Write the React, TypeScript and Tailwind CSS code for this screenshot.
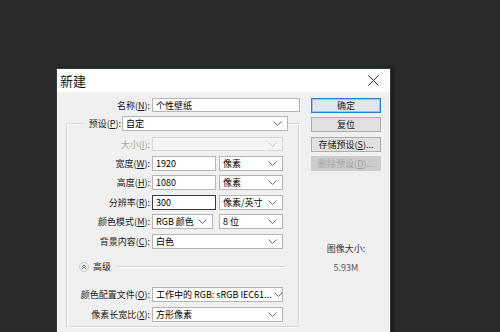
import React from 'react';

const Chevron = ({ light }: { light?: boolean }) => (
  <svg width="9" height="5" viewBox="0 0 9 5" className="shrink-0">
    <polyline points="0.5,0.5 4.5,4.5 8.5,0.5" fill="none" stroke={light ? '#c4c4c4' : '#6b6b6b'} strokeWidth="1" />
  </svg>
);

const Key = ({ k }: { k: string }) => <span className="underline underline-offset-1">{k}</span>;

function Label({ text, k, w, disabled }: { text: string; k: string; w: string; disabled?: boolean }) {
  return (
    <div className={`${w} shrink-0 text-right whitespace-nowrap ${disabled ? 'text-[#a6a6a6]' : 'text-[#1b1b1b]'}`}>
      {text}(<Key k={k} />):
    </div>
  );
}

function Select({ value, w, disabled }: { value?: string; w: string; disabled?: boolean }) {
  return (
    <div
      className={`${w} h-full shrink-0 flex items-center justify-between gap-[2px] pl-[3px] pr-[5px] border ${
        disabled ? 'border-[#d9d9d9] bg-[#f4f4f4]' : 'border-[#b4b4b4] bg-white'
      }`}
    >
      <span className="whitespace-nowrap">{value}</span>
      <Chevron light={disabled} />
    </div>
  );
}

function Input({ value, w, focus }: { value: string; w: string; focus?: boolean }) {
  return (
    <div className={`${w} h-full shrink-0 flex items-center pl-[3px] bg-white border ${focus ? 'border-[#3a3a3a]' : 'border-[#b4b4b4]'}`}>
      {value}
    </div>
  );
}

function Button({ label, primary, disabled }: { label: React.ReactNode; primary?: boolean; disabled?: boolean }) {
  let cls = 'border-[#adadad] bg-[#e1e1e1] text-[#1b1b1b]';
  if (primary) cls = 'border-[#2f7fd0] bg-[#e1e6ec] text-[#1b1b1b] shadow-[inset_0_0_0_1px_#9cc3ea]';
  if (disabled) cls = 'border-[#cccccc] bg-[#cccccc] text-[#a3a3a3]';
  return <div className={`h-[15px] w-[70px] border flex items-center justify-center whitespace-nowrap ${cls}`}>{label}</div>;
}

export default function App() {
  return (
    <div className="w-[500px] h-[332px] overflow-hidden bg-[#2a2a2a] pt-[68px] pl-[56px] font-['Noto_Sans_CJK_SC',sans-serif] text-[9px] leading-[11px]">
      <div className="w-[335px] h-[280px] border border-[#323a44] bg-[#f0f0f0] shadow-[2px_0_3px_rgba(0,0,0,0.45)]">
        {/* title bar */}
        <div className="h-[23px] bg-white flex items-center justify-between pl-[3px] pr-[11px]">
          <span className="text-[13px] leading-[16px] text-[#111]">新建</span>
          <svg width="11" height="11" viewBox="0 0 11 11">
            <path d="M0.5 0.5 L10.5 10.5 M10.5 0.5 L0.5 10.5" stroke="#333" strokeWidth="1" />
          </svg>
        </div>

        <div className="flex pt-[6px]">
          {/* form */}
          <div className="w-[243px] flex flex-col">
            <div className="flex items-center h-[14px]">
              <Label text="名称" k="N" w="w-[93px]" />
              <div className="ml-[2px] h-full">
                <Input value="个性壁纸" w="w-[148px]" />
              </div>
            </div>

            <div className="ml-[9px] w-[233px] mt-[11px] border border-[#d5d5d5] shadow-[inset_1px_1px_0_#fff,1px_1px_0_#fff] pb-[4px]">
              <div className="-mt-[8px] flex items-center h-[15px]">
                <div className="ml-[16px] w-[38px] h-full flex items-center justify-end bg-[#f0f0f0] text-[#1b1b1b] whitespace-nowrap">
                  预设(<Key k="P" />):
                </div>
                <div className="ml-[1px] h-full">
                  <Select value="自定" w="w-[166px]" />
                </div>
              </div>

              <div className="flex flex-col gap-[4.6px] mt-[6px]">
                <div className="flex items-center h-[14px]">
                  <Label text="大小" k="I" w="w-[83px]" disabled />
                  <div className="ml-[2px] h-full">
                    <Select w="w-[131px]" disabled />
                  </div>
                </div>
                {[
                  { t: '宽度', k: 'W', v: '1920', u: '像素' },
                  { t: '高度', k: 'H', v: '1080', u: '像素' },
                  { t: '分辨率', k: 'R', v: '300', u: '像素/英寸', focus: true },
                ].map((r) => (
                  <div key={r.t} className="flex items-center h-[15px]">
                    <Label text={r.t} k={r.k} w="w-[83px]" />
                    <div className="ml-[2px] h-full flex gap-[3px]">
                      <Input value={r.v} w="w-[64px]" focus={r.focus} />
                      <Select value={r.u} w="w-[64px]" />
                    </div>
                  </div>
                ))}
                <div className="flex items-center h-[15px]">
                  <Label text="颜色模式" k="M" w="w-[83px]" />
                  <div className="ml-[2px] h-full flex gap-[6px]">
                    <Select value="RGB 颜色" w="w-[61px]" />
                    <Select value="8 位" w="w-[64px]" />
                  </div>
                </div>
                <div className="flex items-center h-[15px]">
                  <Label text="背景内容" k="C" w="w-[83px]" />
                  <div className="ml-[2px] h-full">
                    <Select value="白色" w="w-[131px]" />
                  </div>
                </div>
              </div>

              {/* advanced */}
              <div className="flex items-center h-[14px] mt-[11px]">
                <div className="ml-[12px] w-[10px] h-[10px] rounded-full border border-[#c8c8c8] bg-[#f7f7f7] flex items-center justify-center">
                  <svg width="6" height="6" viewBox="0 0 6 6">
                    <path d="M0.8 3 L3 0.9 L5.2 3 M0.8 5.3 L3 3.2 L5.2 5.3" fill="none" stroke="#444" strokeWidth="0.9" />
                  </svg>
                </div>
                <span className="ml-[4px] text-[#1b1b1b]">高级</span>
                <div className="ml-[5px] mr-[13px] flex-1 h-[2px] border-t border-[#d5d5d5] border-b border-b-white" />
              </div>

              <div className="flex flex-col gap-[5px] mt-[13px]">
                <div className="flex items-center h-[15px]">
                  <Label text="颜色配置文件" k="O" w="w-[83px]" />
                  <div className="ml-[2px] h-full">
                    <Select value="工作中的 RGB: sRGB IEC61..." w="w-[131px]" />
                  </div>
                </div>
                <div className="flex items-center h-[15px]">
                  <Label text="像素长宽比" k="X" w="w-[83px]" />
                  <div className="ml-[2px] h-full">
                    <Select value="方形像素" w="w-[131px]" />
                  </div>
                </div>
              </div>
            </div>
          </div>

          {/* buttons */}
          <div className="ml-[11px] w-[70px] flex flex-col">
            <div className="flex flex-col gap-[4.4px]">
              <Button label="确定" primary />
              <Button label="复位" />
              <Button label={<>存储预设(<Key k="S" />)...</>} />
              <Button label={<>删除预设(<Key k="D" />)...</>} disabled />
            </div>
            <div className="mt-[72px] leading-[12px] text-center text-[#333]">图像大小:</div>
            <div className="mt-[7px] leading-[12px] text-center text-[#555]">5.93M</div>
          </div>
        </div>
      </div>
    </div>
  );
}
